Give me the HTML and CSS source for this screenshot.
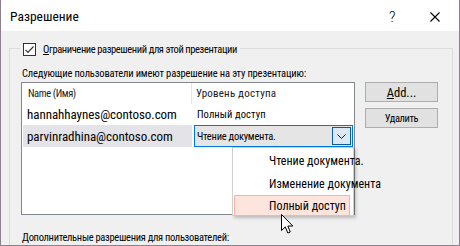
FILE: index.html
```html
<!DOCTYPE html>
<html lang="ru">
<head>
<meta charset="utf-8">
<title>Разрешение</title>
<link rel="stylesheet" href="styles.css">
</head>
<body>
<div class="window">
  <div class="titlebar">
    <div class="title">Разрешение</div>
    <div class="help">?</div>
    <div class="close">
      <svg width="10" height="10" viewBox="0 0 10 10"><path d="M0.5 0.5L9.5 9.5M9.5 0.5L0.5 9.5" stroke="#000" stroke-width="1.1" fill="none"/></svg>
    </div>
  </div>
  <div class="content">
    <div class="group">
      <div class="legend">
        <span class="checkbox">
          <svg width="13" height="13" viewBox="0 0 13 13"><rect x="0.5" y="0.5" width="12" height="12" fill="#fff" stroke="#333"/><path d="M2.5 6.8L5 9.3L10.5 3.5" stroke="#333" stroke-width="1.2" fill="none"/></svg>
        </span>
        <span class="small"><u>О</u>граничение разрешений для этой презентации</span>
      </div>
      <div class="small listlabel">Следующие пользователи имеют разрешение на эту презентацию:</div>
      <div class="row">
        <div class="listbox">
          <div class="lrow header">
            <div class="c1 small">Name (Имя)</div>
            <div class="c2 hdr">Уровень доступа</div>
          </div>
          <div class="lrow">
            <div class="c1 email">hannahhaynes@contoso.com</div>
            <div class="c2 small level">Полный доступ</div>
          </div>
          <div class="lrow sel">
            <div class="c1 email">parvinradhina@contoso.com</div>
            <div class="combo">
              <span class="small level">Чтение документа.</span>
              <span class="dropbtn">
                <svg width="9" height="5" viewBox="0 0 9 5"><path d="M0.5 0.5L4.5 4.5L8.5 0.5" stroke="#222" stroke-width="1" fill="none"/></svg>
              </span>
              <div class="menu">
                <div class="item">Чтение документа.</div>
                <div class="item">Изменение документа</div>
                <div class="item hot">Полный доступ</div>
              </div>
              <svg class="cursor" width="13" height="21" viewBox="0 0 13 21"><path d="M0.5 0.5L0.5 16.5L4.3 12.9L6.8 19L9.3 18L6.8 12L11.8 12Z" fill="#fff" stroke="#000" stroke-width="1" stroke-linejoin="miter"/></svg>
            </div>
          </div>
        </div>
        <div class="buttons">
          <div class="btn add"><u>A</u>dd...</div>
          <div class="btn small">Удалить</div>
        </div>
      </div>
      <div class="small bottomlabel">Дополнительные разрешения для пользователей:</div>
    </div>
  </div>
</div>
</body>
</html>
```
FILE: styles.css
```css
* { box-sizing: border-box; }
html, body { margin: 0; padding: 0; }
body { width: 460px; height: 246px; overflow: hidden; background: #f0f0f0; }

.window {
  width: 460px;
  height: 246px;
  border-left: 1px solid #8c7f8e;
  border-right: 1px solid #8c7f8e;
  border-bottom: 1px solid #8c7f8e;
  display: flex;
  flex-direction: column;
  overflow: hidden;
  font-family: "Roboto Condensed", Roboto, "Liberation Sans", sans-serif;
  color: #000;
}

.titlebar {
  height: 31px;
  flex: none;
  background: #fff;
  display: flex;
  align-items: center;
  padding-left: 9px;
}
.title { font-size: 13.5px; flex: 1; padding-top: 1px; }
.help { font-family: Roboto, sans-serif; font-weight: 300; font-size: 14px; width: 8px; margin-right: 33px; padding-top: 2px; }
.close { width: 10px; height: 10px; margin-right: 19px; margin-top: 3px; display: flex; }

.content {
  flex: 1;
  background: #f0f0f0;
  padding: 17px 0 0 8px;
  overflow: hidden;
}

.small { font-size: 10.5px; letter-spacing: -0.4px; white-space: nowrap; }

.group {
  width: 444px;
  height: 240px;
  border: 1px solid #dcdcdc;
  padding-left: 11px;
}

.legend {
  display: flex;
  align-items: center;
  width: fit-content;
  height: 15px;
  margin: -7px 0 0 -1px;
  padding: 0 3px 0 3px;
  background: #f0f0f0;
  gap: 7px;
}
.checkbox { display: flex; width: 13px; height: 13px; }

.listlabel { line-height: 14px; margin-top: 10px; padding-left: 1px; letter-spacing: -0.15px; }

.row { display: flex; gap: 10px; margin-top: 1px; }

.listbox {
  width: 334px;
  height: 133px;
  border: 1px solid #828790;
  background: #fff;
}
.lrow { display: flex; height: 21px; align-items: center; }
.c1 { width: 170px; height: 100%; display: flex; align-items: center; padding-left: 5px; }
.c2 { padding-left: 4px; }
.header .c1 { border-right: 1px solid #e5e5e5; padding-left: 6px; color: #1a1a1a; }
.header .c2 { padding-left: 4px; }
.hdr { font-size: 11px; letter-spacing: 0.2px; white-space: nowrap; color: #1a1a1a; }
.level { letter-spacing: 0.1px; }
.lrow:nth-child(2) .c2 { padding-left: 5px; }
.email { font-size: 13px; letter-spacing: -0.05px; }

.sel { height: 22px; align-items: stretch; }
.sel .c1 { background: #e3e3e8; margin-left: 1px; width: 169px; padding-left: 4px; }

.combo {
  position: relative;
  margin-left: 2px;
  width: 159px;
  height: 22px;
  border: 1px solid #0078d7;
  background: #e5e5e5;
  display: flex;
  align-items: center;
  justify-content: space-between;
  padding: 0 1px 0 2px;
}
.combo .level { letter-spacing: -0.25px; }
.dropbtn {
  width: 19px;
  height: 18px;
  border: 1px solid #0b5a9a;
  background: #dce8f3;
  display: flex;
  align-items: center;
  justify-content: center;
}

.menu {
  position: absolute;
  left: 37px;
  top: 21px;
  width: 122px;
  height: 69px;
  background: #fff;
  border: 1px solid #cfcfcf;
  box-shadow: 2px 2px 3px rgba(0,0,0,0.22);
  padding: 1px 3px 0 1px;
  display: flex;
  flex-direction: column;
  font-size: 12px;
}
.item { height: 23px; display: flex; align-items: center; padding-left: 34px; border: 1px solid transparent; white-space: nowrap; flex: none; }
.item.hot { background: #fde4dc; border-color: #f4b6a2; height: 21px; }

.cursor { position: absolute; left: 86px; top: 88px; }

.buttons { display: flex; flex-direction: column; gap: 6px; }
.btn {
  width: 73px;
  height: 20px;
  background: #e1e1e1;
  border: 1px solid #adadad;
  display: flex;
  align-items: center;
  justify-content: center;
}
.btn.add { font-size: 12.5px; }

.bottomlabel { line-height: 14px; margin-top: 16px; padding-left: 1px; letter-spacing: -0.3px; }
```
